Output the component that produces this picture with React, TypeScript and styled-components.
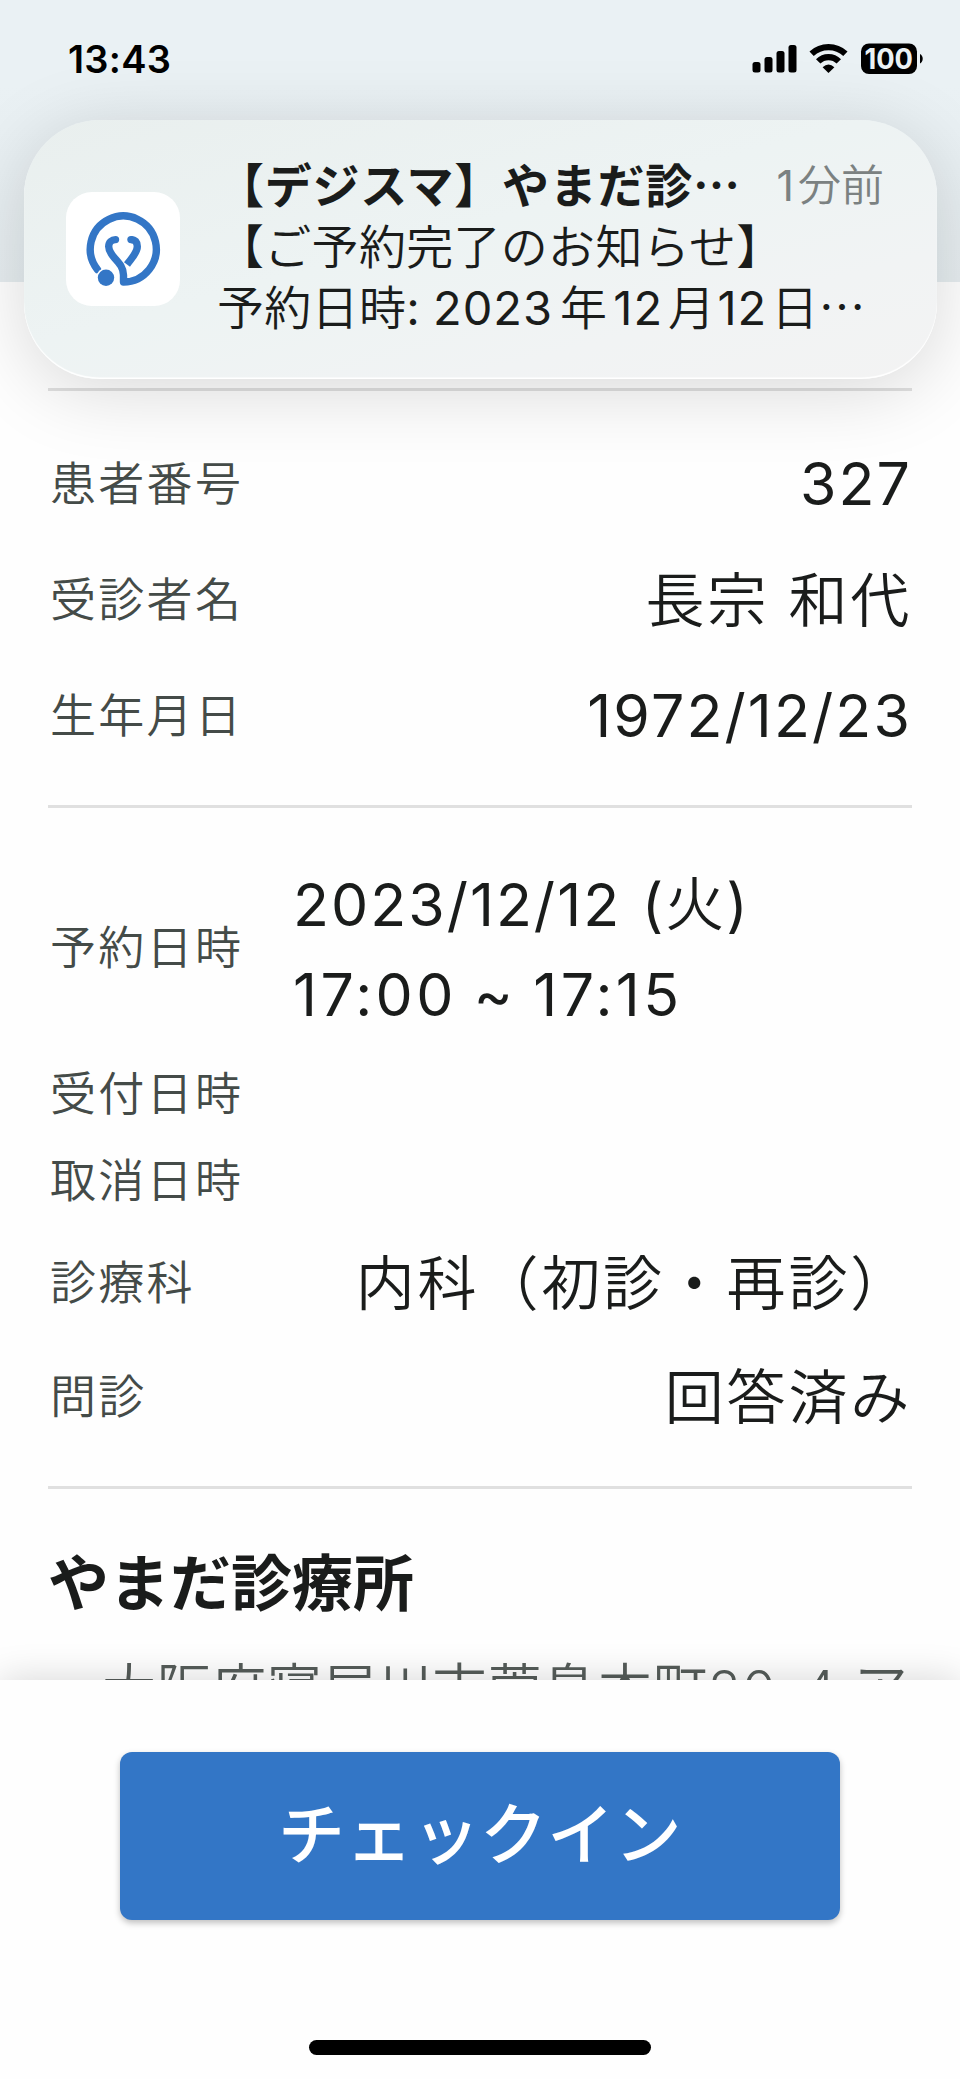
import React from "react";
import styled, { createGlobalStyle } from "styled-components";

const Global = createGlobalStyle`
  *{box-sizing:border-box}
  body{margin:0;background:#fefefe;font-family:Inter,"Noto Sans CJK JP",sans-serif;color:#1a1c1b}
`;

const Screen = styled.div`
  position: relative; width: 960px; height: 2079px; overflow: hidden;
  background: #fefefe; display: flex; flex-direction: column;
`;
const Header = styled.header`
  height: 282px; flex: none; background: linear-gradient(#eaf1f4, #eaf1f4 30%, #e5ecef);
  padding: 38px 36px 0 68px;
`;
const StatusBar = styled.div`
  display: flex; align-items: center; justify-content: space-between; height: 42px;
  color: #000;
`;
const Clock = styled.time`
  font-size: 38px; font-weight: 600; letter-spacing: 0.3px;
`;
const StatusIcons = styled.svg`
  display: block;
`;
const Banner = styled.section`
  position: absolute; left: 24px; top: 120px; width: 913px; height: 259px;
  border-radius: 76px;
  background: linear-gradient(165deg, #e9efee 0%, #edf3f3 45%, #f1f3f4 75%, #f3f3f3 100%);
  box-shadow: 0 12px 76px rgba(0, 0, 0, 0.15), inset 0 -1.5px 1px #fff;
  display: flex; align-items: flex-start;
`;
const AppIcon = styled.svg`
  flex: none; margin: 72px 0 0 42px;
`;
const BannerBody = styled.div`
  flex: 1; margin: 35px 53px 0 37px; display: flex; flex-direction: column;
`;
const BannerHead = styled.div`
  display: flex; justify-content: space-between; height: 61px; line-height: 61px;
`;
const BannerTitle = styled.strong`
  font-size: 47px; font-weight: 700; letter-spacing: 0.75px; white-space: nowrap;
`;
const BannerAge = styled.span`
  font-size: 43px; font-weight: 350; color: #7b8181; white-space: nowrap;
`;
const BannerLine = styled.p`
  margin: 0; height: 61px; line-height: 61px; font-size: 47px; font-weight: 350; letter-spacing: 0.3px;
  white-space: nowrap;
`;
const Latin = styled.span<{ $before?: number; $after?: number }>`
  font-weight: 400; letter-spacing: 1px; word-spacing: -2px;
  margin-left: ${(p) => p.$before ?? 0}px; margin-right: ${(p) => p.$after ?? 0}px;
`;
const Content = styled.main`
  flex: none; padding: 106px 48px 0; height: 1398px; overflow: hidden;
`;
const Rule = styled.hr`
  margin: 0; border: 0; height: 3px; background: #e0e0e0;
`;
const Row = styled.div<{ $h: number }>`
  display: flex; align-items: center; justify-content: space-between;
  height: ${(p) => p.$h}px; padding: 0 2px;
`;
const Group = styled.div<{ $top: number; $bottom: number }>`
  padding: ${(p) => p.$top}px 0 ${(p) => p.$bottom}px;
`;
const Label = styled.span`
  font-size: 46px; font-weight: 350; letter-spacing: 2.3px; color: #444b48; white-space: nowrap;
  padding-bottom: 8px;
`;
const Value = styled.span<{ $latin?: boolean }>`
  font-size: 59px; font-weight: ${(p) => (p.$latin ? 380 : 350)};
  letter-spacing: ${(p) => (p.$latin ? 2.1 : 2.8)}px;
  padding-bottom: ${(p) => (p.$latin ? 2 : 8)}px;
  margin-right: -2px; white-space: nowrap;
`;
const Slot = styled.div`
  width: 617px; font-size: 59px; line-height: 90px; font-weight: 380; padding-top: 3px;
`;
const SlotLine = styled.div<{ $tracking: number; $words?: number }>`
  letter-spacing: ${(p) => p.$tracking}px; word-spacing: ${(p) => p.$words ?? 0}px;
`;
const Kanji = styled.span`
  font-weight: 350;
`;
const Clinic = styled.h2`
  margin: 0; padding: 53px 0 0; font-size: 61px; line-height: 84px; font-weight: 700;
`;
const Address = styled.p`
  margin: 24px 0 0 54px; font-size: 54px; line-height: 80px; font-weight: 350; letter-spacing: 1.1px;
  color: #555c59; white-space: nowrap;
`;
const Footer = styled.footer`
  position: relative; flex: 1; background: #fefefe; box-shadow: 0 0 36px rgba(0, 0, 0, 0.16);
  display: flex; flex-direction: column; align-items: center; padding-top: 72px;
`;
const CheckIn = styled.button`
  width: 720px; height: 168px; border: 0; border-radius: 12px; background: #3376c6; color: #fff;
  font: 500 67px/1 Inter, "Noto Sans CJK JP", sans-serif; letter-spacing: 0.3px; padding: 0 0 3px;
  box-shadow: 0 3px 6px rgba(0, 0, 0, 0.25);
`;
const HomeBar = styled.div`
  margin-top: 120px; width: 342px; height: 15px; border-radius: 8px; background: #000;
`;

export default function App() {
  return (
    <Screen>
      <Global />
      <Header>
        <StatusBar>
          <Clock>13:43</Clock>
          <StatusIcons width="174" height="42" viewBox="750 38 174 42">
            <rect x="752.5" y="62" width="8" height="10.5" rx="2.5" />
            <rect x="764.5" y="57" width="8" height="15.5" rx="2.5" />
            <rect x="776.5" y="51" width="8" height="21.5" rx="2.5" />
            <rect x="788.5" y="45" width="8" height="27.5" rx="2.5" />
            <g fill="none" stroke="#000" strokeWidth="6.2">
              <path d="M811.6 53.8a24.7 24.7 0 0 1 33.8 0" />
              <path d="M818.2 61.4a14.5 14.5 0 0 1 20.600 0" />
            </g>
            <path d="M822.6 67.200q5.900-5.200 11.800 0l-5.900 5.900z" />
            <rect x="861" y="43.500" width="56" height="30.500" rx="8" />
            <path d="M920 54a5.500 5.500 0 0 1 0 9.500z" />
            <text
              x="864.5" y="69.200" fill="#eaf1f4" fontSize="28.5" fontWeight="650"
              textLength="48.500" lengthAdjust="spacingAndGlyphs"
            >100</text>
          </StatusIcons>
        </StatusBar>
      </Header>
      <Content>
        <Rule />
        <Group $top={35} $bottom={31}>
          <Row $h={116}><Label>患者番号</Label><Value $latin>327</Value></Row>
          <Row $h={116}><Label>受診者名</Label><Value>長宗 和代</Value></Row>
          <Row $h={116}><Label>生年月日</Label><Value $latin>1972/12/23</Value></Row>
        </Group>
        <Rule />
        <Group $top={50} $bottom={46}>
          <Row $h={180}>
            <Label>予約日時</Label>
            <Slot>
              <SlotLine $tracking={2} $words={2}>2023/12/12 (<Kanji>火</Kanji>)</SlotLine>
              <SlotLine $tracking={3.4} $words={-3}>17:00 ~ 17:15</SlotLine>
            </Slot>
          </Row>
          <Row $h={112}><Label>受付日時</Label></Row>
          <Row $h={62}><Label>取消日時</Label></Row>
          <Row $h={142}><Label>診療科</Label><Value>内科（初診・再診）</Value></Row>
          <Row $h={86}><Label>問診</Label><Value>回答済み</Value></Row>
        </Group>
        <Rule />
        <Clinic>やまだ診療所</Clinic>
        <Address>大阪府寝屋川市萱島本町20-4 ア</Address>
      </Content>
      <Footer>
        <CheckIn>チェックイン</CheckIn>
        <HomeBar />
      </Footer>
      <Banner>
        <AppIcon width="114" height="114" viewBox="66 192 114 114">
          <rect x="66" y="192" width="114" height="114" rx="26" fill="#fff" />
          <g fill="none" stroke="#3376c6" strokeWidth="7.4">
            <path
              d="M97.500 269.600A33 33 0 1 1 123.500 282V275C123.500 268 119.500 263.500 114.500 258C111 254 108.700 250.500 108.700 246.500C108.700 242 112 239.600 115.500 239.600"
              strokeLinejoin="round" strokeLinecap="round"
            />
            <path d="M131 239.600C135 239.600 137.300 242 137.300 246.500C137.300 253 131 259 127 264.500" />
          </g>
          <circle cx="131" cy="239.600" r="3.700" fill="#3376c6" />
          <circle cx="106" cy="277.700" r="9.700" fill="#fff" />
          <circle cx="106" cy="277.700" r="8.200" fill="#3376c6" />
        </AppIcon>
        <BannerBody>
          <BannerHead>
            <BannerTitle>【デジスマ】やまだ診⋯</BannerTitle>
            <BannerAge><Latin $after={3}>1</Latin>分前</BannerAge>
          </BannerHead>
          <BannerLine>【ご予約完了のお知らせ】</BannerLine>
          <BannerLine>
            予約日時<Latin $after={7}>: 2023</Latin>年<Latin $before={6} $after={5}>12</Latin>月
            <Latin $before={2} $after={4}>12</Latin>日⋯
          </BannerLine>
        </BannerBody>
      </Banner>
    </Screen>
  );
}
